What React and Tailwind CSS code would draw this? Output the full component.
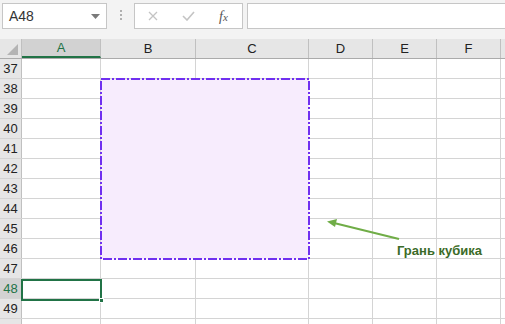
import React from 'react';

const cols = [
  { key: 'A', w: 'w-[79px]' },
  { key: 'B', w: 'w-[95px]' },
  { key: 'C', w: 'w-[113px]' },
  { key: 'D', w: 'w-[64px]' },
  { key: 'E', w: 'w-[64px]' },
  { key: 'F', w: 'w-[64px]' },
  { key: 'G', w: 'w-[40px]' },
];

const rows = [37, 38, 39, 40, 41, 42, 43, 44, 45, 46, 47, 48, 49, 50];

const App = () => {
  return (
    <div className="relative w-[505px] h-[324px] overflow-hidden bg-white font-['Liberation_Sans',sans-serif] text-[#222]">
      {/* Formula bar */}
      <div className="flex items-start h-[39px] bg-[#f3f3f3] pt-[3px] pl-[2px]">
        <div className="flex items-center justify-between w-[105px] h-[26px] bg-white border border-[#c6c6c6] pl-[6px] pr-[6px]">
          <span className="text-[14px] text-[#333]">A48</span>
          <svg width="9" height="5" viewBox="0 0 9 5"><path d="M0 0 H9 L4.5 5 Z" fill="#7a7a7a" /></svg>
        </div>
        <div className="flex flex-col gap-[2px] w-[27px] items-center pt-[7px]">
          <span className="w-[2px] h-[2px] bg-[#b0b0b0]" />
          <span className="w-[2px] h-[2px] bg-[#b0b0b0]" />
          <span className="w-[2px] h-[2px] bg-[#b0b0b0]" />
        </div>
        <div className="flex items-center w-[109px] h-[26px] bg-white border border-[#c6c6c6] pl-[13px] gap-[24px]">
          <svg width="10" height="10" viewBox="0 0 10 10"><path d="M1 1 L9 9 M9 1 L1 9" stroke="#c4c4c4" strokeWidth="1.3" /></svg>
          <svg width="13" height="10" viewBox="0 0 13 10"><path d="M1 5 L5 9 L12 1" stroke="#c4c4c4" strokeWidth="1.6" fill="none" /></svg>
          <span className="font-['Liberation_Serif',serif] italic text-[14px] text-[#555]">f<span className="text-[11px]">x</span></span>
        </div>
        <div className="ml-[4px] flex-1 h-[26px] bg-white border border-[#c6c6c6] border-r-0" />
      </div>

      {/* Column headers */}
      <div className="flex h-[20px] bg-[#e6e6e6] border-b border-[#ababab]">
        <div className="relative w-[22px] shrink-0 border-r border-[#c0c0c0]">
          <svg className="absolute right-[3px] bottom-[3px]" width="11" height="11" viewBox="0 0 11 11"><path d="M11 0 V11 H0 Z" fill="#b4b4b4" /></svg>
        </div>
        {cols.map((c) => (
          <div
            key={c.key}
            className={`${c.w} shrink-0 flex items-center justify-center text-[13px] border-r border-[#c0c0c0] ${c.key === 'A' ? 'bg-[#d2d2d2] text-[#217346] border-b-2 border-b-[#217346]' : ''}`}
          >
            {c.key === 'G' ? '' : c.key}
          </div>
        ))}
      </div>

      {/* Rows */}
      {rows.map((r) => (
        <div key={r} className="flex h-[20px] border-b border-[#d4d4d4]">
          <div className={`w-[22px] shrink-0 flex items-center justify-center text-[13px] border-r border-[#c0c0c0] ${r === 48 ? 'bg-[#d2d2d2] text-[#217346]' : 'bg-[#e6e6e6]'}`}>
            {r === 50 ? '' : r}
          </div>
          {cols.map((c) => (
            <div key={c.key} className={`${c.w} shrink-0 border-r border-[#d4d4d4]`} />
          ))}
        </div>
      ))}

      {/* Selected cell A48 */}
      <div className="absolute left-[21px] top-[279px] w-[81px] h-[22px] border-2 border-[#217346]">
        <span className="absolute right-[-4px] bottom-[-4px] w-[5px] h-[5px] bg-[#217346] border border-white" />
      </div>

      {/* Cube face shape and arrow */}
      <svg className="absolute left-0 top-0" width="505" height="324" viewBox="0 0 505 324">
        <rect x="101" y="79" width="208" height="180" fill="#f7ecfd" stroke="#7030f0" strokeWidth="2" strokeDasharray="9 2 2 2" />
        <line x1="399" y1="239" x2="334" y2="223" stroke="#70ad47" strokeWidth="2" />
        <path d="M327 221.5 L337 219 L335 227 Z" fill="#70ad47" />
      </svg>

      <span className="absolute left-[397px] top-[241px] text-[13px] font-bold text-[#3b6b28]">Грань кубика</span>
    </div>
  );
};

export default App;
